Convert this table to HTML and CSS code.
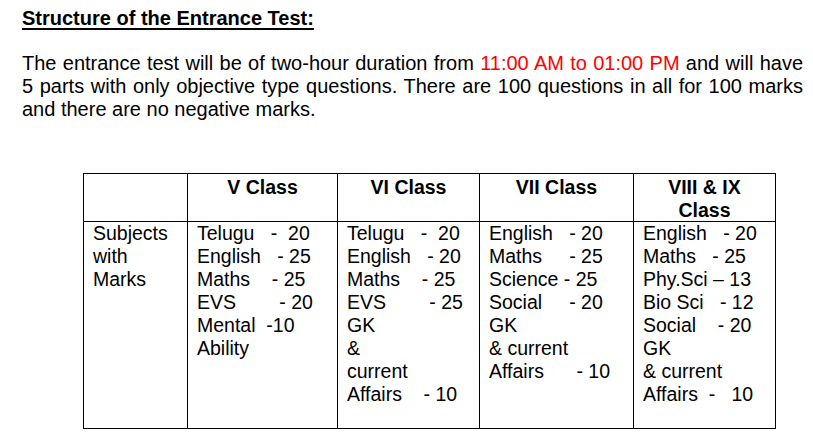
FILE: index.html
```html
<!DOCTYPE html>
<html lang="en">
<head>
<meta charset="utf-8">
<title>Structure of the Entrance Test</title>
<link rel="stylesheet" href="styles.css">
</head>
<body>
<main class="page">
  <h1 class="title">Structure of the Entrance Test:</h1>
  <p class="intro">The entrance test will be of two-hour duration from <span class="red">11:00 AM to 01:00 PM</span> and will have 5 parts with only objective type questions. There are 100 questions in all for 100 marks and there are no negative marks.</p>
  <table class="marks">
    <colgroup>
      <col class="c1"><col class="c2"><col class="c3"><col class="c4"><col class="c5">
    </colgroup>
    <thead>
      <tr>
        <th></th>
        <th>V Class</th>
        <th>VI Class</th>
        <th>VII Class</th>
        <th class="two-line">VIII &amp; IX<br>Class</th>
      </tr>
    </thead>
    <tbody>
      <tr>
        <td>Subjects<br>with<br>Marks</td>
        <td class="pre">Telugu   -  20
English   - 25
Maths    - 25
EVS        - 20
Mental  -10
Ability</td>
        <td class="pre">Telugu   -  20
English   - 20
Maths    - 25
EVS        - 25
GK
&amp;
current
Affairs    - 10</td>
        <td class="pre">English   - 20
Maths     - 25
Science - 25
Social     - 20
GK
&amp; current
Affairs      - 10</td>
        <td class="pre">English   - 20
Maths   - 25
Phy.Sci – 13
Bio Sci   - 12
Social    - 20
GK
&amp; current
Affairs  -   10</td>
      </tr>
    </tbody>
  </table>
</main>
</body>
</html>
```

FILE: styles.css
```css
html, body {
  margin: 0;
  padding: 0;
  background: #ffffff;
}

body {
  font-family: "Liberation Sans", Arial, sans-serif;
  font-size: 19.5px;
  line-height: 23px;
  color: #000000;
}

.page {
  padding: 7px 0 0 22px;
  width: 781px;
}

.title {
  margin: 0;
  font-size: 20px;
  line-height: 23px;
  font-weight: bold;
  text-decoration: underline;
  text-decoration-thickness: 2px;
  text-underline-offset: 3px;
}

.intro {
  margin: 22px 0 0 0;
  font-size: 20px;
  text-align: justify;
}

.red {
  color: #ff0000;
}

.marks {
  margin: 52px 0 0 61px;
  border-collapse: collapse;
  table-layout: fixed;
  width: 693px;
}

.c1 { width: 104px; }
.c2 { width: 150px; }
.c3 { width: 142px; }
.c4 { width: 154px; }
.c5 { width: 142px; }

.marks th,
.marks td {
  border: 1px solid #000000;
  vertical-align: top;
}

.marks th {
  padding: 2px 4px 0 4px;
  text-align: center;
  font-weight: bold;
  line-height: 22.5px;
}

.marks td {
  padding: 0 4px 22px 9px;
  text-align: left;
}

.pre {
  white-space: pre;
}
```
